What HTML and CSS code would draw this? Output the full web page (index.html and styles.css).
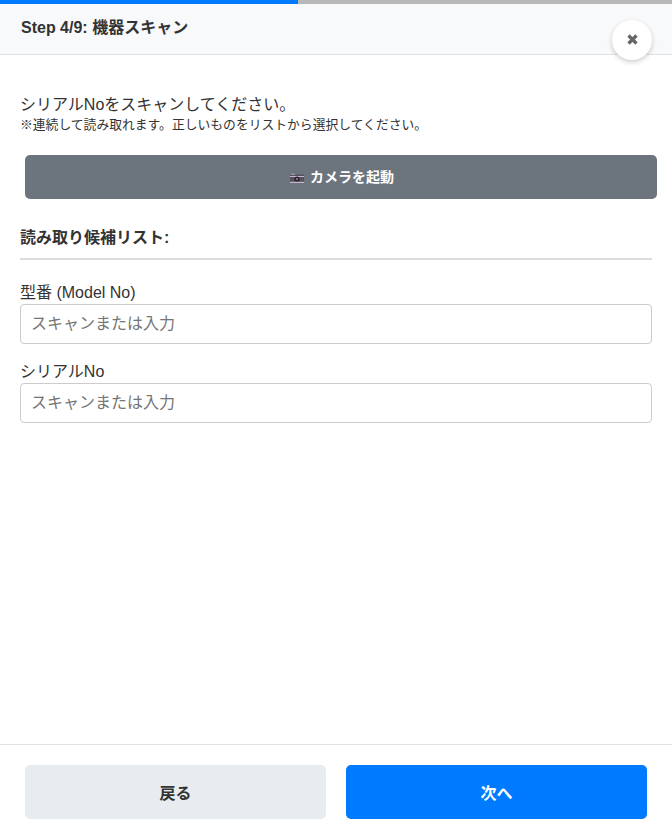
FILE: index.html
```html
<!DOCTYPE html>
<html lang="ja">
<head>
  <meta charset="UTF-8">
  <meta name="viewport" content="width=device-width, initial-scale=1.0">
  <title>機器スキャン</title>
  <link rel="stylesheet" href="styles.css">
</head>
<body>
<div class="wizard">
  <!-- Progress -->
  <div class="progress"><div class="progress-fill"></div></div>

  <!-- Header -->
  <div class="header">
    <div class="header-title">Step 4/9: 機器スキャン</div>
  </div>
  <button class="close-btn" aria-label="閉じる">
    <svg width="11" height="11" viewBox="0 0 11 11"><path d="M1.5 1.5 9.5 9.5M9.5 1.5 1.5 9.5" stroke="#666" stroke-width="3.2"/></svg>
  </button>

  <!-- Content -->
  <div class="content">
    <p class="lead">シリアルNoをスキャンしてください。</p>
    <p class="note">※連続して読み取れます。正しいものをリストから選択してください。</p>

    <button class="camera-btn">
      <svg class="camera-icon" width="14" height="10" viewBox="0 0 14 10">
        <rect x="0" y="1.5" width="14" height="8.5" fill="#57505e"/>
        <rect x="0" y="3" width="14" height="1" fill="#c3b8cf"/>
        <rect x="1" y="0.5" width="4" height="1.5" fill="#9a91a4"/>
        <circle cx="7" cy="6" r="2.6" fill="#26222a"/>
        <circle cx="7" cy="6" r="1" fill="#9a91a4"/>
        <rect x="0" y="8.8" width="14" height="1.2" fill="#c3b8cf"/>
      </svg>
      <span>カメラを起動</span>
    </button>

    <h3 class="list-title">読み取り候補リスト:</h3>

    <div class="field">
      <label class="field-label" for="model">型番 (Model No)</label>
      <input class="field-input" id="model" type="text" placeholder="スキャンまたは入力">
    </div>
    <div class="field">
      <label class="field-label" for="serial">シリアルNo</label>
      <input class="field-input" id="serial" type="text" placeholder="スキャンまたは入力">
    </div>
  </div>

  <!-- Footer -->
  <div class="footer">
    <button class="nav-btn nav-back">戻る</button>
    <button class="nav-btn nav-next">次へ</button>
  </div>
</div>
</body>
</html>
```

FILE: styles.css
```css
html, body {
  margin: 0;
  padding: 0;
  height: 100%;
  background: #fff;
}

body {
  font-family: "Liberation Sans", Arial, "Noto Sans CJK JP", sans-serif;
  color: #333;
  overflow: hidden;
}

.wizard {
  position: relative;
  display: flex;
  flex-direction: column;
  height: 839px;
}

/* Progress */
.progress {
  height: 4px;
  background: #b8b8b8;
}

.progress-fill {
  width: 44.4%;
  height: 100%;
  background: #007bff;
}

/* Header */
.header {
  box-sizing: border-box;
  height: 51px;
  padding: 14px 21px 0;
  background: #f8f9fa;
  border-bottom: 1px solid #dee2e6;
}

.header-title {
  font-size: 16px;
  font-weight: bold;
  line-height: 20px;
}

.close-btn {
  position: absolute;
  top: 20px;
  right: 20px;
  display: flex;
  align-items: center;
  justify-content: center;
  width: 40px;
  height: 40px;
  padding: 0 0 2px;
  border: 0;
  border-radius: 50%;
  background: #fff;
  box-shadow: 0 2px 5px rgba(0, 0, 0, 0.2);
}

/* Content */
.content {
  flex: 1;
  padding: 40px 20px 0;
}

.lead {
  margin: 0;
  font-size: 16px;
  line-height: 20px;
}

.note {
  margin: 1px 0 0;
  font-size: 12.8px;
  line-height: 17px;
}

.camera-btn {
  display: flex;
  align-items: center;
  justify-content: center;
  gap: 6px;
  box-sizing: border-box;
  width: 632px;
  height: 44px;
  margin: 22px 0 0 5px;
  padding: 0 0 2px 2px;
  border: 0;
  border-radius: 5px;
  background: #6c757d;
  color: #fff;
  font-family: inherit;
  font-size: 14px;
  font-weight: bold;
}

.camera-icon {
  margin-top: 3px;
}

.list-title {
  margin: 28px 0 0;
  padding-bottom: 9px;
  border-bottom: 2px solid #ddd;
  font-size: 16px;
  font-weight: bold;
  line-height: 22px;
}

.field {
  margin-top: 22px;
}

.field + .field {
  margin-top: 17px;
}

.field-label {
  display: block;
  font-size: 16px;
  line-height: 22px;
}

.field-input {
  display: block;
  box-sizing: border-box;
  width: 100%;
  height: 40px;
  padding: 0 10px;
  border: 1px solid #ccc;
  border-radius: 4px;
  font-family: inherit;
  font-size: 16px;
  color: #333;
}

.field-input::placeholder {
  color: #757575;
}

/* Footer */
.footer {
  display: flex;
  gap: 20px;
  box-sizing: border-box;
  height: 95px;
  padding: 20px 25px 0;
  border-top: 1px solid #dee2e6;
}

.nav-btn {
  flex: 1;
  height: 54px;
  padding: 0;
  border: 0;
  border-radius: 5px;
  font-family: inherit;
  font-size: 16px;
  font-weight: bold;
}

.nav-back {
  background: #e9ecef;
  color: #333;
}

.nav-next {
  background: #007bff;
  color: #fff;
}
```
